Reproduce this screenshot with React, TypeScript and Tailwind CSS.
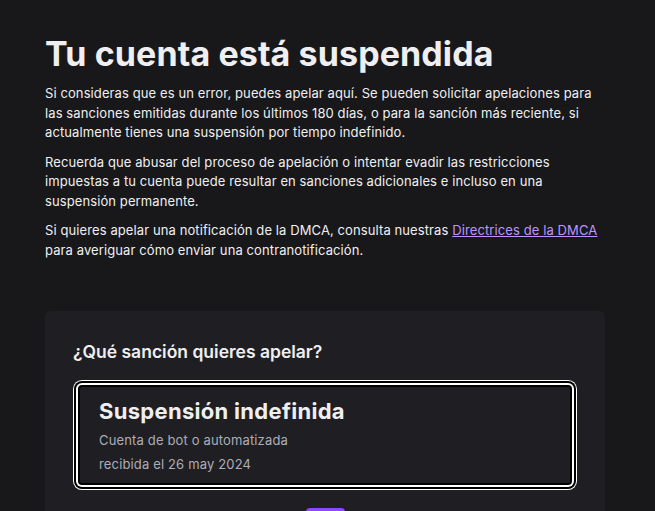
export default function App() {
  return (
    <div className="min-h-screen bg-[#18181b] text-[#efeff1] font-['Inter',sans-serif] overflow-hidden h-[511px]">
      <div className="w-[560px] ml-[45px] pt-[32px]">
        <h1 className="text-[34px] font-bold leading-[44px] tracking-[0.1px]">Tu cuenta está suspendida</h1>
        <div className="mt-[8px] flex flex-col gap-[10px] text-[13px] leading-[19.5px] tracking-[0.1px]">
          <p>
            Si consideras que es un error, puedes apelar aquí. Se pueden solicitar apelaciones para las sanciones
            emitidas durante los últimos 180 días, o para la sanción más reciente, si actualmente tienes una suspensión
            por tiempo indefinido.
          </p>
          <p>
            Recuerda que abusar del proceso de apelación o intentar evadir las restricciones impuestas a tu cuenta
            puede resultar en sanciones adicionales e incluso en una suspensión permanente.
          </p>
          <p>
            Si quieres apelar una notificación de la DMCA, consulta nuestras{" "}
            <a href="#" className="text-[#bf94ff] underline">
              Directrices de la DMCA
            </a>{" "}
            para averiguar cómo enviar una contranotificación.
          </p>
        </div>

        <div className="mt-[51px] rounded-md bg-[#1f1f23] px-[28px] pt-[29px] pb-[40px]">
          <h2 className="text-[17.5px] font-semibold leading-[24px]">¿Qué sanción quieres apelar?</h2>
          <div className="mt-[16px] p-[5px]">
            <div className="rounded-[4px] border-2 border-black bg-[#1f1f23] px-[19px] pt-[10px] pb-[7px] shadow-[0_0_0_2px_#fff,0_0_0_4px_#000,0_0_0_5px_#fff]">
              <div className="text-[22px] font-bold leading-[28px] tracking-[0.3px]">Suspensión indefinida</div>
              <div className="mt-[3px] text-[13px] leading-[24px] tracking-[0.15px] text-[#adadb8]">
                Cuenta de bot o automatizada
              </div>
              <div className="text-[13px] leading-[24px] tracking-[0.15px] text-[#adadb8]">recibida el 26 may 2024</div>
            </div>
          </div>
          <div className="mt-[18px] flex justify-center">
            <button className="h-[30px] w-[39px] rounded bg-[#9147ff]" />
          </div>
        </div>
      </div>
    </div>
  );
}
